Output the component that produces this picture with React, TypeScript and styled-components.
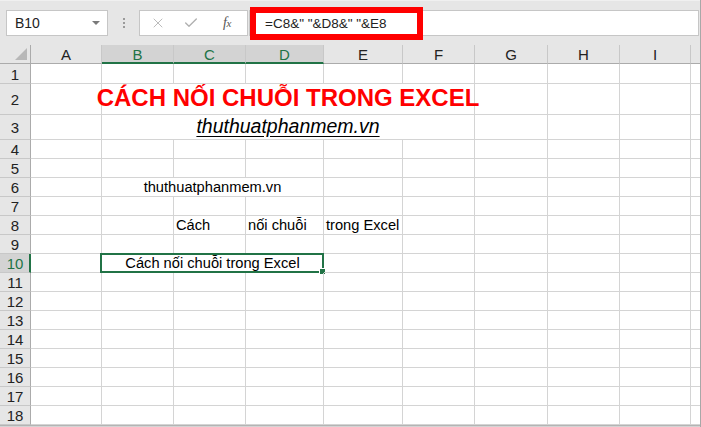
import React from 'react';
import styled, { createGlobalStyle, css } from 'styled-components';
import { X, Check } from 'lucide-react';

const GlobalStyle = createGlobalStyle`
  * {
    box-sizing: border-box;
  }
  body {
    margin: 0;
    background: #ffffff;
    font-family: "Liberation Sans", Arial, sans-serif;
    overflow: hidden;
  }
`;

const COLUMNS = [
  { key: 'A', width: 71 },
  { key: 'B', width: 72 },
  { key: 'C', width: 72 },
  { key: 'D', width: 78 },
  { key: 'E', width: 79 },
  { key: 'F', width: 72 },
  { key: 'G', width: 73 },
  { key: 'H', width: 72 },
  { key: 'I', width: 71 },
  { key: '', width: 9 },
];

const ROW_HEIGHTS = [20, 31, 25, 19, 19, 19, 19, 19, 19, 19, 19, 19, 19, 19, 19, 19, 19, 19];

const SELECTED_COLS = [1, 2, 3];
const SELECTED_ROW = 10;

type CellKind = 'plain' | 'title' | 'link' | 'center';

interface CellDef {
  col: number;
  span?: number;
  text: string;
  kind?: CellKind;
  selected?: boolean;
}

const CONTENT: Record<number, CellDef[]> = {
  2: [{ col: 1, span: 5, text: 'CÁCH NỐI CHUỖI TRONG EXCEL', kind: 'title' }],
  3: [{ col: 1, span: 5, text: 'thuthuatphanmem.vn', kind: 'link' }],
  6: [{ col: 1, span: 3, text: 'thuthuatphanmem.vn', kind: 'center' }],
  8: [
    { col: 2, text: 'Cách' },
    { col: 3, text: 'nối chuỗi' },
    { col: 4, text: 'trong Excel' },
  ],
  10: [{ col: 1, span: 3, text: 'Cách nối chuỗi trong Excel', kind: 'center', selected: true }],
};

const Window = styled.div`
  width: 701px;
  height: 427px;
  background: #ffffff;
  border-right: 1px solid #a8a8a8;
  display: flex;
  flex-direction: column;
  overflow: hidden;
`;

const Toolbar = styled.div`
  height: 45px;
  flex: none;
  background: #e6e6e6;
  border-top: 1px solid #f0f0f0;
  display: flex;
  align-items: flex-start;
  padding: 9px 0 0 6px;
`;

const NameBox = styled.div`
  width: 102px;
  height: 26px;
  background: #ffffff;
  border: 1px solid #c6c6c6;
  display: flex;
  align-items: center;
  justify-content: space-between;
  padding: 0 7px 0 8px;
  font-size: 14px;
  color: #222222;
`;

const DropArrow = styled.span`
  width: 0;
  height: 0;
  border-left: 4px solid transparent;
  border-right: 4px solid transparent;
  border-top: 4px solid #7a7a7a;
`;

const Grip = styled.div`
  width: 31px;
  height: 26px;
  display: flex;
  flex-direction: column;
  align-items: center;
  justify-content: center;
  gap: 2px;

  span {
    width: 2px;
    height: 2px;
    background: #9a9a9a;
  }
`;

const FuncButtons = styled.div`
  width: 109px;
  height: 26px;
  background: #ffffff;
  border: 1px solid #c6c6c6;
  display: flex;
  align-items: center;
  padding-left: 10px;
  color: #b0b0b0;

  svg + svg {
    margin-left: 17px;
  }
`;

const FxLabel = styled.span`
  margin-left: 24px;
  font-family: "Liberation Serif", "Times New Roman", serif;
  font-style: italic;
  font-size: 14px;
  color: #555555;
  letter-spacing: -0.5px;

  sub {
    font-size: 11px;
    vertical-align: baseline;
  }
`;

const FormulaInput = styled.div`
  flex: 1;
  height: 26px;
  margin-left: 1px;
  margin-right: 1px;
  background: #ffffff;
  border: 1px solid #c6c6c6;
  position: relative;
  display: flex;
  align-items: center;
  padding-left: 15px;
  font-size: 13.5px;
  color: #222222;
  white-space: pre;
`;

const Highlight = styled.div`
  position: absolute;
  left: 0;
  top: -4px;
  width: 173px;
  height: 33px;
  border: 6px solid #ff0000;
  pointer-events: none;
`;

const Sheet = styled.div`
  display: grid;
  grid-template-columns: 31px ${COLUMNS.map((c) => `${c.width}px`).join(' ')};
  grid-template-rows: 19px ${ROW_HEIGHTS.map((h) => `${h}px`).join(' ')};
  flex: none;
`;

const Corner = styled.div`
  background: #e6e6e6;
  border-right: 1px solid #ababab;
  border-bottom: 1px solid #ababab;
  display: flex;
  align-items: flex-end;
  justify-content: flex-end;
  padding: 0 3px 3px 0;
`;

const ColHeader = styled.div<{ $selected: boolean; $last: boolean }>`
  background: #e6e6e6;
  border-right: ${(p) => (p.$last ? 'none' : '1px solid #c8c8c8')};
  border-bottom: 1px solid #ababab;
  display: flex;
  align-items: center;
  justify-content: center;
  font-size: 15px;
  color: #222222;
  padding-top: 1px;

  ${(p) =>
    p.$selected &&
    css`
      background: #d3d3d3;
      color: #217346;
      border-bottom: 2px solid #217346;
      padding-top: 2px;
    `}
`;

const RowHeader = styled.div<{ $selected: boolean }>`
  background: #e6e6e6;
  border-right: 1px solid #ababab;
  border-bottom: 1px solid #c8c8c8;
  display: flex;
  align-items: center;
  justify-content: center;
  font-size: 15px;
  color: #222222;
  padding-top: 1px;

  ${(p) =>
    p.$selected &&
    css`
      background: #d3d3d3;
      color: #217346;
      border-right: 2px solid #217346;
      padding-left: 1px;
    `}
`;

const Cell = styled.div<{ $span: number; $kind: CellKind; $last: boolean }>`
  grid-column: span ${(p) => p.$span};
  border-right: ${(p) => (p.$last ? 'none' : '1px solid #d4d4d4')};
  border-bottom: 1px solid #d4d4d4;
  display: flex;
  align-items: flex-end;
  justify-content: ${(p) => (p.$kind === 'plain' ? 'flex-start' : 'center')};
  padding: 0 0 1px 2px;
  position: relative;
  white-space: nowrap;
  font-size: 14.67px;
  line-height: 15px;
  color: #000000;

  ${(p) =>
    p.$kind === 'title' &&
    css`
      font-size: 24px;
      line-height: 24px;
      font-weight: bold;
      color: #ff0000;
      padding: 0 0 4px 0;
    `}

  ${(p) =>
    p.$kind === 'link' &&
    css`
      font-size: 19.5px;
      line-height: 20px;
      font-style: italic;
      text-decoration: underline;
      text-underline-offset: 3px;
      padding: 0 0 3px 0;
    `}

  ${(p) =>
    p.$kind === 'center' &&
    css`
      padding: 0 0 1px 0;
    `}
`;

const Selection = styled.div`
  position: absolute;
  top: -1px;
  left: -2px;
  right: -1px;
  bottom: -1px;
  border: 2px solid #217346;
  pointer-events: none;
`;

const FillHandle = styled.div`
  position: absolute;
  right: -4px;
  bottom: -4px;
  width: 7px;
  height: 7px;
  background: #217346;
  border: 1px solid #ffffff;
`;

const Footer = styled.div`
  flex: 1;
  background: #d4d4d4;
  border-top: 1px solid #b4b4b4;
`;

function renderRow(row: number) {
  const defs = CONTENT[row] ?? [];
  const cells: React.ReactNode[] = [];
  let c = 0;
  while (c < COLUMNS.length) {
    const def = defs.find((d) => d.col === c);
    const span = def?.span ?? 1;
    const last = c + span === COLUMNS.length;
    cells.push(
      <Cell key={`${row}-${c}`} $span={span} $kind={def?.kind ?? 'plain'} $last={last}>
        {def?.text}
        {def?.selected && (
          <Selection>
            <FillHandle />
          </Selection>
        )}
      </Cell>
    );
    c += span;
  }
  return cells;
}

export default function App() {
  return (
    <>
      <GlobalStyle />
      <Window>
        <Toolbar>
          <NameBox>
            B10
            <DropArrow />
          </NameBox>
          <Grip>
            <span />
            <span />
            <span />
          </Grip>
          <FuncButtons>
            <X size={16} strokeWidth={1.3} />
            <Check size={16} strokeWidth={2} />
            <FxLabel>
              f<sub>x</sub>
            </FxLabel>
          </FuncButtons>
          <FormulaInput>
            =C8&amp;" "&amp;D8&amp;" "&amp;E8
            <Highlight />
          </FormulaInput>
        </Toolbar>
        <Sheet>
          <Corner>
            <svg width="12" height="12" viewBox="0 0 12 12">
              <polygon points="12,0 12,12 0,12" fill="#b8b8b8" />
            </svg>
          </Corner>
          {COLUMNS.map((col, i) => (
            <ColHeader
              key={`h-${i}`}
              $selected={SELECTED_COLS.includes(i)}
              $last={i === COLUMNS.length - 1}
            >
              {col.key}
            </ColHeader>
          ))}
          {ROW_HEIGHTS.map((_, i) => {
            const row = i + 1;
            return (
              <React.Fragment key={`r-${row}`}>
                <RowHeader $selected={row === SELECTED_ROW}>{row}</RowHeader>
                {renderRow(row)}
              </React.Fragment>
            );
          })}
        </Sheet>
        <Footer />
      </Window>
    </>
  );
}
